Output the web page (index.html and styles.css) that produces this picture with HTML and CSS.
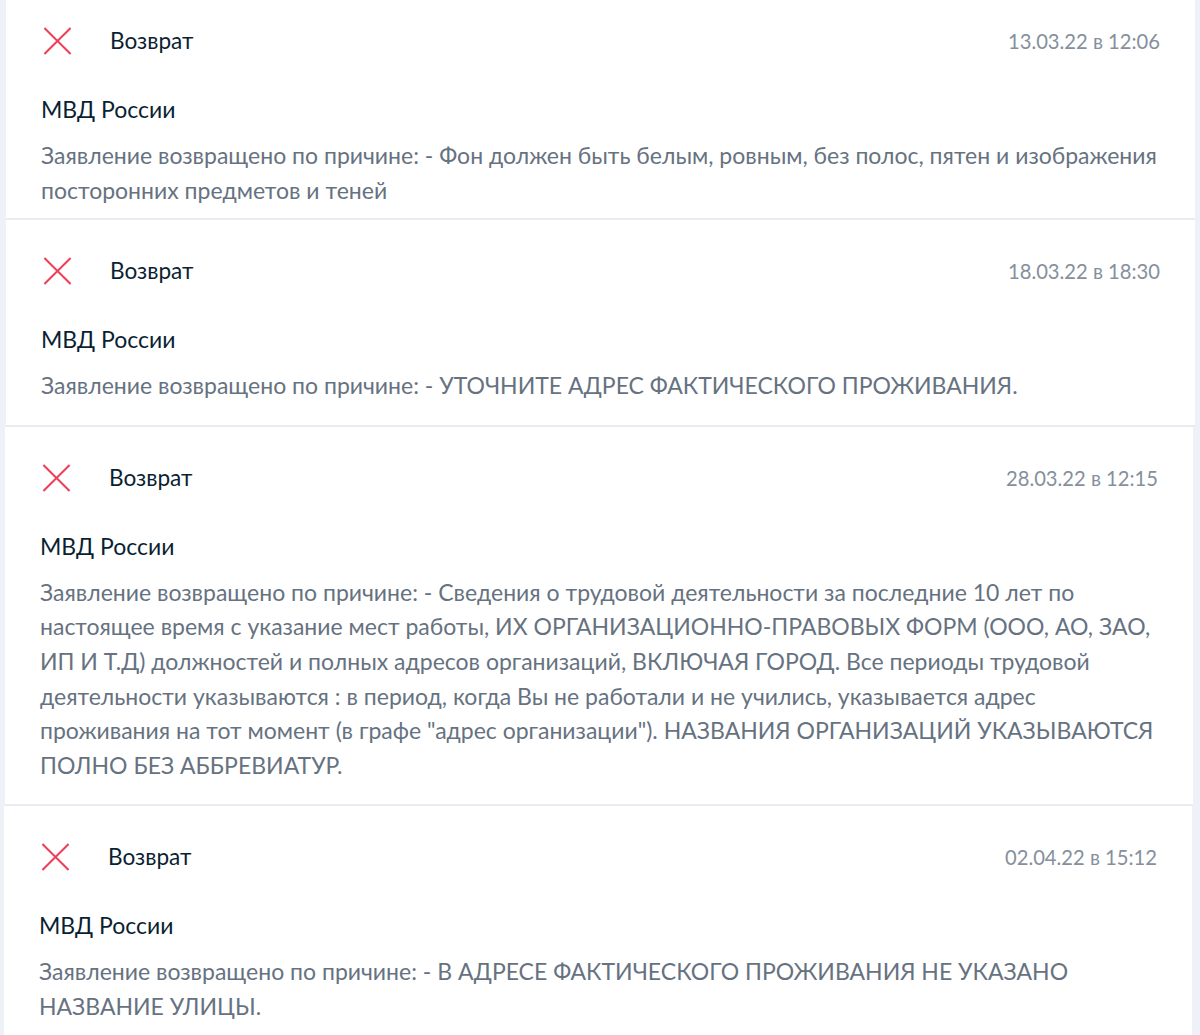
FILE: index.html
```html
<!DOCTYPE html>
<html lang="ru">
<head>
<meta charset="utf-8">
<title>Уведомления</title>
<link rel="stylesheet" href="styles.css">
</head>
<body>
<div class="feed">
  <div class="card card-1">
    <div class="head">
      <svg class="icon" width="30" height="30" viewBox="0 0 30 30"><path d="M1 1 L29 29 M29 1 L1 29" stroke="#ee3f58" stroke-width="2.2" fill="none"/></svg>
      <span class="status">Возврат</span>
      <span class="date">13.03.22 в 12:06</span>
    </div>
    <div class="org">МВД России</div>
    <p class="text">Заявление возвращено по причине: - Фон должен быть белым, ровным, без полос, пятен и изображения посторонних предметов и теней</p>
  </div>
  <div class="card card-2">
    <div class="head">
      <svg class="icon" width="30" height="30" viewBox="0 0 30 30"><path d="M1 1 L29 29 M29 1 L1 29" stroke="#ee3f58" stroke-width="2.2" fill="none"/></svg>
      <span class="status">Возврат</span>
      <span class="date">18.03.22 в 18:30</span>
    </div>
    <div class="org">МВД России</div>
    <p class="text">Заявление возвращено по причине: - УТОЧНИТЕ АДРЕС ФАКТИЧЕСКОГО ПРОЖИВАНИЯ.</p>
  </div>
  <div class="card card-3">
    <div class="head">
      <svg class="icon" width="30" height="30" viewBox="0 0 30 30"><path d="M1 1 L29 29 M29 1 L1 29" stroke="#ee3f58" stroke-width="2.2" fill="none"/></svg>
      <span class="status">Возврат</span>
      <span class="date">28.03.22 в 12:15</span>
    </div>
    <div class="org">МВД России</div>
    <p class="text">Заявление возвращено по причине: - Сведения о трудовой деятельности за последние 10 лет по настоящее время с указание мест работы, ИХ ОРГАНИЗАЦИОННО-ПРАВОВЫХ ФОРМ (ООО, АО, ЗАО, ИП И Т.Д) должностей и полных адресов организаций, ВКЛЮЧАЯ ГОРОД. Все периоды трудовой деятельности указываются : в период, когда Вы не работали и не учились, указывается адрес проживания на тот момент (в графе "адрес организации"). НАЗВАНИЯ ОРГАНИЗАЦИЙ УКАЗЫВАЮТСЯ ПОЛНО БЕЗ АББРЕВИАТУР.</p>
  </div>
  <div class="card card-4">
    <div class="head">
      <svg class="icon" width="30" height="30" viewBox="0 0 30 30"><path d="M1 1 L29 29 M29 1 L1 29" stroke="#ee3f58" stroke-width="2.2" fill="none"/></svg>
      <span class="status">Возврат</span>
      <span class="date">02.04.22 в 15:12</span>
    </div>
    <div class="org">МВД России</div>
    <p class="text">Заявление возвращено по причине: - В АДРЕСЕ ФАКТИЧЕСКОГО ПРОЖИВАНИЯ НЕ УКАЗАНО НАЗВАНИЕ УЛИЦЫ.</p>
  </div>
</div>
</body>
</html>
```

FILE: styles.css
```css
html, body {
  margin: 0;
  padding: 0;
}
body {
  background: #eef2f8;
  font-family: Lato, "Noto Sans", sans-serif;
  overflow: hidden;
  height: 1035px;
}
.feed {
  display: flex;
  flex-direction: column;
  min-height: 1035px;
}
.card {
  background: #fff;
  padding: 36px 35px 22px 35px;
  border-bottom: 2px solid #e8ebf0;
}
.card-1 {
  margin: 0 5px 0 6px;
  padding-top: 26px;
  padding-bottom: 11px;
}
.card-2 {
  margin: 0 5px 0 6px;
}
.card-3 {
  margin: 0 7px 0 5px;
}
.card-4 {
  margin: 0 8px 0 4px;
  border-bottom: none;
  flex: 1;
}
.head {
  display: flex;
  align-items: center;
  height: 30px;
}
.icon {
  flex: none;
  margin-left: 2px;
  width: 29px;
  height: 28px;
}
.status {
  margin-left: 38px;
  font-size: 22.6px;
  color: #0b1f33;
  line-height: 30px;
}
.date {
  margin-left: auto;
  font-size: 20.2px;
  color: #86909c;
  line-height: 30px;
}
.org {
  margin-top: 38px;
  font-size: 23px;
  line-height: 30px;
  color: #0b1f33;
}
.text {
  margin: 14px 0 0 0;
  font-size: 23px;
  line-height: 34.6px;
  color: #66727f;
}
```
